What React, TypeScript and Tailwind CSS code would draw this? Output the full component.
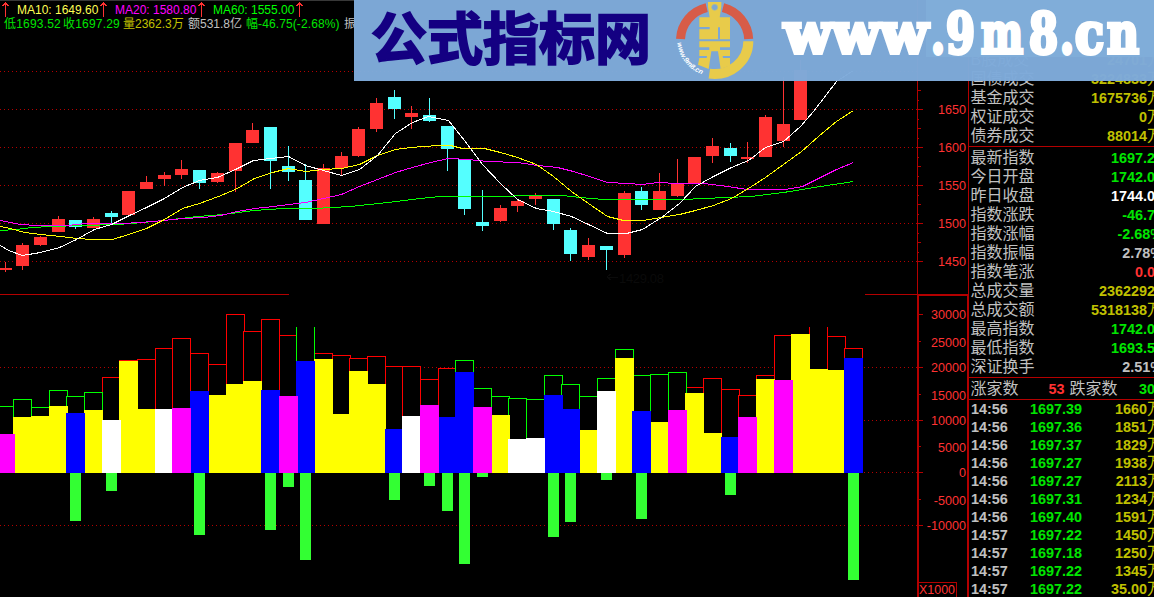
import clsx from "clsx"

type Candle = [x: number, open: number, close: number, high: number, low: number, up: 0 | 1]
type Bar = [x: number, top: number, fill: "Y" | "B" | "W" | "M", limit: number, side: "G" | "R", below?: number]

const candles: Candle[] = [
    [-1, 268, 270, 262, 272, 1], [16, 245, 266, 243, 270, 1], [34, 237, 245, 236, 246, 1], [52, 219, 232, 216, 232, 1],
    [69, 220, 227, 220, 229, 0], [87, 219, 228, 217, 228, 1], [105, 213, 217, 211, 224, 0], [122, 191, 215, 191, 215, 1],
    [140, 182, 189, 176, 189, 1], [158, 175, 179, 172, 186, 1], [175, 169, 175, 160, 179, 1], [193, 170, 183, 170, 189, 0],
    [211, 173, 182, 172, 183, 1], [229, 143, 171, 143, 192, 1], [246, 130, 143, 123, 143, 1], [264, 127, 161, 127, 189, 0],
    [282, 166, 172, 146, 181, 0], [299, 180, 220, 164, 220, 0], [317, 168, 224, 164, 224, 1], [335, 156, 168, 152, 175, 1],
    [352, 129, 156, 127, 157, 1], [370, 103, 129, 98, 132, 1], [388, 97, 109, 90, 119, 0], [405, 113, 117, 106, 129, 1],
    [423, 115, 121, 98, 122, 0], [441, 126, 149, 126, 171, 0], [458, 159, 209, 159, 215, 0], [476, 222, 226, 190, 231, 0],
    [494, 208, 221, 205, 222, 1], [511, 201, 206, 200, 212, 1], [529, 196, 199, 193, 205, 1], [547, 199, 224, 199, 230, 0],
    [564, 230, 254, 228, 261, 0], [582, 245, 257, 238, 260, 1], [600, 246, 250, 246, 270, 0], [618, 193, 255, 191, 258, 1],
    [635, 191, 205, 187, 210, 0], [653, 191, 210, 173, 210, 1], [671, 183, 196, 159, 197, 1], [688, 157, 183, 157, 183, 1],
    [706, 146, 156, 138, 163, 1], [724, 148, 156, 143, 162, 0], [741, 157, 159, 142, 163, 1], [759, 117, 157, 115, 157, 1],
    [777, 124, 141, 77, 147, 1], [794, 70, 120, 60, 120, 1],
]

const bars: Bar[] = [
    [-4, 434, "M", 406, "G"], [13, 417, "Y", 399, "G"], [31, 416, "Y", 407, "G"], [49, 406, "Y", 390, "G"],
    [66, 413, "B", 396, "G", 521], [84, 410, "Y", 392, "G"], [102, 420, "W", 377, "R", 491], [119, 361, "Y", 360, "R"],
    [137, 409, "Y", 359, "R"], [155, 409, "W", 348, "R"], [172, 408, "M", 338, "R"], [190, 391, "B", 353, "R", 535],
    [208, 395, "Y", 364, "R"], [226, 384, "Y", 314, "R"], [243, 381, "Y", 331, "R"], [261, 390, "B", 319, "R", 530],
    [279, 396, "M", 335, "R", 487], [296, 361, "B", 316, "G", 560], [314, 359, "Y", 353, "R"], [332, 414, "Y", 355, "R"],
    [349, 371, "Y", 358, "R"], [367, 384, "Y", 356, "R"], [385, 429, "B", 366, "R", 500], [402, 416, "W", 366, "R"],
    [420, 405, "M", 379, "R", 486], [438, 417, "B", 368, "R", 511], [455, 372, "B", 360, "G", 564], [473, 407, "M", 388, "G", 477],
    [491, 415, "Y", 396, "G"], [508, 439, "W", 398, "G"], [526, 438, "W", 399, "G"], [544, 395, "B", 375, "G", 537],
    [561, 409, "B", 384, "G", 522], [579, 430, "Y", 396, "G"], [597, 391, "W", 378, "G", 480], [615, 358, "Y", 349, "G"],
    [632, 411, "B", 375, "G", 519], [650, 422, "Y", 374, "G"], [668, 410, "M", 372, "G"], [685, 393, "Y", 387, "R"],
    [703, 433, "Y", 378, "R"], [721, 437, "B", 389, "R", 495], [738, 417, "M", 395, "R"], [756, 379, "Y", 375, "R"],
    [774, 380, "M", 335, "R"], [791, 334, "Y", 334, "R"], [809, 369, "Y", 315, "R"], [827, 370, "Y", 336, "R"],
    [844, 358, "B", 348, "R", 580],
]

const fills = { Y: "#ffff00", B: "#0000ff", W: "#ffffff", M: "#ff00ff" }

const averages = [
    { color: "#00ff00", points: "0,230 15,229 32,227 50,226 83,225 117,224 143,222 163,220 197,216 223,214 253,210 283,208 313,208 350,206 387,202 420,198 440,196 507,196 520,195 562,195 580,197 603,199 683,199 703,198 750,196 783,192 820,186 853,181" },
    { color: "#ff00ff", points: "0,220 20,224 37,225 67,225 85,223 123,223 153,221 182,218 203,217 220,215 237,211 254,208 273,206 305,202 323,198 341,194 359,186 377,179 395,172 412,167 430,162 448,158 468,159 487,161 517,162 537,165 557,167 573,171 589,176 607,182 627,183 642,184 657,182 677,183 703,183 727,186 747,189 785,189 802,186 818,178 836,169 853,162" },
    { color: "#ffff00", points: "0,226 10,228 24,232 40,234 60,236 76,238 92,239 112,239 128,234 146,228 164,219 182,208 199,203 218,196 235,189 254,178 272,172 288,168 305,171 323,169 341,168 359,164 377,155 395,149 410,147 437,145 450,145 462,148 484,148 500,152 517,157 536,164 553,176 571,191 588,203 607,216 623,220 642,220 661,217 679,214 695,210 713,205 731,198 748,188 765,177 783,164 801,151 818,136 836,121 853,110" },
    { color: "#ffffff", points: "0,245 8,250 22,255 40,252 59,247 76,239 94,229 111,224 129,215 146,207 164,198 182,187 199,180 217,177 235,169 253,160 270,158 288,156 305,165 323,170 341,175 359,169 377,155 395,133 412,122 428,116 448,120 464,140 482,164 500,183 517,199 536,208 553,211 571,216 588,224 607,233 626,233 642,229 661,217 679,203 695,186 713,176 731,167 748,160 765,147 783,141 800,126 813,111 836,81 853,70" },
]

const priceLabels = [["1650", 109], ["1600", 147], ["1550", 185], ["1500", 223], ["1450", 261]] as const
const volumeLabels = [
    ["30000", 314], ["25000", 342], ["20000", 367], ["15000", 395], ["10000", 420],
    ["5000", 447], ["0", 472], ["-5000", 500], ["-10000", 525],
] as const

const yellow = "text-[#c0c000]"
const green = "text-[#00e600]"
const gray = "text-[#c0c0c0]"
const red = "text-[#ff3232]"

const turnover = [
    ["B股成交", "24701万", yellow], ["国债成交", "3224833万", yellow], ["基金成交", "1675736万", yellow],
    ["权证成交", "0万", yellow], ["债券成交", "88014万", yellow],
]

const quotes = [
    ["最新指数", "1697.29", green], ["今日开盘", "1742.01", green], ["昨日收盘", "1744.04", "text-white"],
    ["指数涨跌", "-46.75", green], ["指数涨幅", "-2.68%", green], ["指数振幅", "2.78%", gray],
    ["指数笔涨", "0.00", red], ["总成交量", "23622923", yellow], ["总成交额", "5318138万", yellow],
    ["最高指数", "1742.01", green], ["最低指数", "1693.52", green], ["深证换手", "2.51%", gray],
]

const ticks = [
    ["14:56", "1697.39", "1660"], ["14:56", "1697.36", "1851"], ["14:56", "1697.37", "1829"], ["14:56", "1697.27", "1938"],
    ["14:56", "1697.27", "2113"], ["14:56", "1697.31", "1234"], ["14:56", "1697.40", "1591"], ["14:57", "1697.22", "1450"],
    ["14:57", "1697.18", "1250"], ["14:57", "1697.22", "1345"], ["14:57", "1697.22", "35.00"],
]

const Grid = () => (
    <g stroke="#b40000" strokeDasharray="1 3">
        {[71, 109, 147, 185, 223, 261, 367, 420, 472, 525].map((y) => (
            <line key={y} x1={0} x2={917} y1={y + 0.5} y2={y + 0.5} />
        ))}
    </g>
)

const Axis = () => (
    <g fill="#b40000">
        <rect x={917} y={0} width={1} height={597} />
        <rect x={918} y={295} width={1} height={302} />
        <rect x={968} y={0} width={1} height={597} />
        <rect x={967} y={295} width={1} height={302} />
        <rect x={0} y={294} width={289} height={1} />
        <rect x={865} y={294} width={103} height={1} />
        <rect x={917} y={295} width={51} height={1} />
        {[109, 147, 185, 223, 261, 314, 367, 420, 472, 525].map((y) => <rect key={y} x={918} y={y} width={5} height={1} />)}
        {[90, 128, 166, 204, 242, 341, 394, 446, 499].map((y) => <rect key={y} x={918} y={y} width={3} height={1} />)}
        {[100, 119, 138, 157, 176, 195, 214, 233, 252].map((y) => <rect key={y} x={918} y={y} width={1} height={1} />)}
        <path d="M917 582.5H956.5V597" fill="none" stroke="#b40000" />
    </g>
)

const Limits = ({ side }: { side: "G" | "R" }) => (
    <g fill="#000" stroke={side === "G" ? "#00ff00" : "#ff0000"}>
        {bars.filter((b) => b[4] === side).map(([x, , , limit]) => (
            <rect key={x} x={x + 0.5} y={limit + 0.5} width={18} height={472 - limit} />
        ))}
    </g>
)

const Chart = () => (
    <svg width="969" height="597" viewBox="0 0 969 597" className="block shrink-0" shapeRendering="crispEdges">
        <rect width={969} height={597} fill="#000" />
        <Grid />
        {candles.map(([x, top, bottom, high, low, up]) => (
            <g key={x} fill={up ? "#ff3232" : "#54ffff"}>
                <rect x={x} y={top} width={13} height={bottom - top} />
                <rect x={x + 6} y={high} width={1} height={low - high} />
            </g>
        ))}
        {averages.map(({ color, points }) => (
            <polyline key={color} points={points} transform="translate(0.5 0.5)" fill="none" stroke={color} />
        ))}
        <Limits side="R" />
        <Limits side="G" />
        {(["Y", "B", "W", "M"] as const).map((kind) => (
            <g key={kind} fill={fills[kind]}>
                {bars.filter((b) => b[2] === kind).map(([x, top]) => (
                    <rect key={x} x={x} y={top} width={19} height={473 - top} />
                ))}
            </g>
        ))}
        {bars.map(([x, , , , , below]) => below && (
            <rect key={x} x={x + 4} y={473} width={11} height={below - 473} fill="#33ff33" />
        ))}
        <rect x={289} y={290} width={576} height={37} fill="#000" />
        <Axis />
        <g fill="#ff3232" fontSize={12.6} textAnchor="end" fontFamily="'Liberation Sans', sans-serif">
            {[...priceLabels, ...volumeLabels].map(([label, y]) => (
                <text key={label} x={966} y={y + 5}>{label}</text>
            ))}
            <text x={955} y={594} textLength={36} lengthAdjust="spacingAndGlyphs">X1000</text>
        </g>
        <g fill="#0a0a0a" stroke="none" fontSize={13} fontFamily="'Liberation Sans', sans-serif">
            <text x={619} y={283} textLength={45}>1429.08</text>
            <path d="M607 277h11M607 277l4-3M607 277l4 3" stroke="#0a0a0a" />
        </g>
    </svg>
)

const Arrow = () => (
    <svg width="7" height="15" viewBox="0 0 7 15" className="shrink-0" shapeRendering="crispEdges" fill="#ff3232">
        <path d="M3 0h1v15H3zM2 1h3v1H2zM1 2h5v1H1zM0 3h2v1H0zM5 3h2v1H5z" />
    </svg>
)

const Header = () => (
    <header className="absolute left-0 top-0 w-[360px] overflow-hidden border-t border-[#383838] font-['Liberation_Sans','Noto_Sans_CJK_SC',sans-serif] text-[12px] leading-[14px] whitespace-nowrap">
        <div className="flex h-[16px] items-center pl-[2px] pt-px">
            <Arrow />
            <span className="w-[91px] pl-2 text-[#ffff54]">MA10: 1649.60</span>
            <Arrow />
            <span className="w-[91px] pl-2 text-[#ff00ff]">MA20: 1580.80</span>
            <Arrow />
            <span className="w-[91px] pl-2 text-[#00ff00]">MA60: 1555.00</span>
            <Arrow />
        </div>
        <div className="flex pl-1">
            <span className={clsx("w-[59px] tracking-[0.2px]", green)}>低1693.52</span>
            <span className={clsx("w-[60px] tracking-[0.2px]", green)}>收1697.29</span>
            <span className={clsx("w-[65px]", yellow)}>量2362.3万</span>
            <span className={clsx("w-[58px]", gray)}>额531.8亿</span>
            <span className={clsx("w-[98px] tracking-[0.1px]", green)}>幅-46.75(-2.68%)</span>
            <span className={gray}>振</span>
        </div>
    </header>
)

const CoinLogo = () => (
    <svg x={316} y={0} width={90} height={82} viewBox="0 0 270 246">
        <g fill="none" strokeWidth={27}>
            <path d="M31.500 117A102 102 0 0 1 110 23" stroke="#d75c48" />
            <path d="M159 23A102 102 0 0 1 236 117" stroke="#d75c48" />
            <path d="M235 124A102 98 0 0 1 118 221" stroke="#e8cb4a" strokeWidth={30} />
        </g>
        <path id="rim" d="M22 128A112 112 0 0 0 110 227" fill="none" />
        <text fill="#fff" fontSize={21} fontWeight={700} fontStyle="italic" fontFamily="'Liberation Sans', sans-serif">
            <textPath href="#rim">www.9m8.cn</textPath>
        </text>
        <g fill="#e8cb4a">
            <path d="M114 6H154V20L149 52H180V118H88V88H119V81H88V52H119L114 20Z" />
            <path d="M88 124H180V142H150V150H180V168H158L159 174H180V192L182 196L152 207L144 154H124L116 207L84 194L88 174H110L111 168H88V150H118V142H88Z" />
        </g>
        <path d="M144 82H150V118H144Z" fill="#7ca7d6" />
        <circle cx={134} cy={22} r={9} fill="#7ca7d6" stroke="#a9b9a0" strokeWidth={2} />
    </svg>
)

const domain = [
    ["www", 430, 144], [".", 577, 14], ["9", 592, 29], ["m", 627, 42],
    ["8", 675, 29], [".", 706, 14], ["c", 721, 29], ["n", 753, 32],
] as const

const Banner = () => (
    <div className="absolute left-[354px] top-0 h-[81px] w-[800px]">
        <svg width="800" height="81" viewBox="0 0 800 81" className="block">
            <rect width={800} height={81} fill="#7eaad9" opacity={0.98} />
            <rect x={572} width={228} height={57} fill="#80add9" />
            <text x={17} y={59} fill="#140082" stroke="#140082" strokeWidth={2} fontSize={56} fontWeight={700} textLength={280}
                fontFamily="'Noto Sans CJK SC', sans-serif">公式指标网</text>
            <CoinLogo />
            <g fill="#fff" stroke="#fff" strokeWidth={4} fontSize={56} fontWeight={700} fontFamily="'DejaVu Serif', serif">
                {domain.map(([part, x, width]) => (
                    <text key={x} x={x} y={53} textLength={width} lengthAdjust="spacingAndGlyphs">{part}</text>
                ))}
            </g>
        </svg>
    </div>
)

const Row = ({ label, value, color }: { label: string; value: string; color: string }) => (
    <div className="flex h-[19px] items-center justify-between">
        <span className={gray}>{label}</span>
        <Value text={value} color={color} />
    </div>
)

const Value = ({ text, color }: { text: string; color: string }) => (
    <span className={clsx("flex items-center", color)}>
        <b className="text-[14.4px]">{text.replace("万", "")}</b>
        {text.endsWith("万") && <span>万</span>}
    </span>
)

const SidePanel = () => (
    <aside className="w-[185px] shrink-0 overflow-hidden">
        <div className="w-[194px] pt-[50px] font-['Liberation_Sans','Noto_Sans_CJK_SC',sans-serif] text-[16px] leading-[18px] whitespace-nowrap">
            <section className="h-[97px] border-b border-[#b40000] pl-[1.5px]">
                {turnover.map(([label, value, color]) => <Row key={label} label={label} value={value} color={color} />)}
            </section>
            <section className="h-[231px] border-b border-[#b40000] pl-[1.5px] pt-px">
                {quotes.map(([label, value, color]) => <Row key={label} label={label} value={value} color={color} />)}
            </section>
            <section className="flex h-[22px] items-center border-b border-[#b40000] pl-[1.5px] pt-px">
                <span className={gray}>涨家数</span>
                <b className={clsx("w-[46px] text-right text-[14.4px]", red)}>53</b>
                <span className={clsx("pl-[5px]", gray)}>跌家数</span>
                <b className={clsx("flex-1 text-right text-[14.4px]", green)}>309</b>
            </section>
            <section className="pl-[2px]">
                {ticks.map(([time, price, volume], i) => (
                    <div key={i} className="flex h-[18px] items-center">
                        <b className={clsx("w-[59px] text-[14.4px]", gray)}>{time}</b>
                        <b className={clsx("flex-1 text-[14.4px]", green)}>{price}</b>
                        <Value text={volume + "万"} color={yellow} />
                    </div>
                ))}
            </section>
        </div>
    </aside>
)

export default function App() {
    return (
        <main className="relative flex h-[597px] w-[1154px] overflow-hidden bg-black">
            <Chart />
            <SidePanel />
            <Header />
            <Banner />
        </main>
    )
}
